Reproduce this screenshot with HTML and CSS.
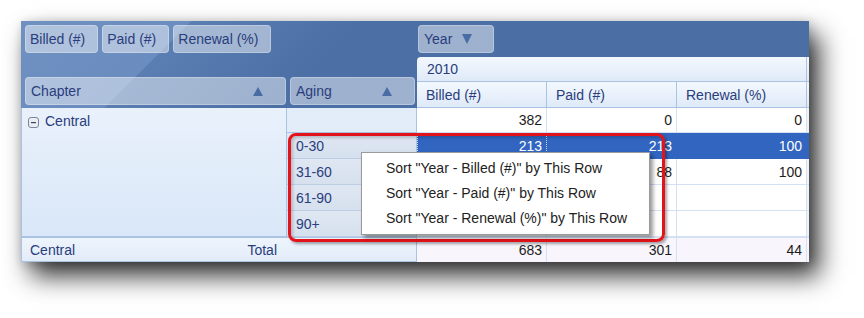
FILE: index.html
```html
<!DOCTYPE html>
<html lang="en">
<head>
    <meta charset="UTF-8">
    <title>Pivot Grid - Sort by Row</title>
    <link rel="stylesheet" href="styles.css">
</head>
<body>
    <div class="pivot">
        <div class="grid">
            <div class="filter-area">
                <span class="field">Billed (#)</span>
                <span class="field">Paid (#)</span>
                <span class="field">Renewal (%)</span>
            </div>
            <div class="column-area">
                <span class="field year">Year <i class="tri down"></i></span>
            </div>

            <div class="row-field chapter"><span class="field grow">Chapter <i class="tri up"></i></span></div>
            <div class="row-field aging"><span class="field grow">Aging <i class="tri up"></i></span></div>
            <div class="col-head span3 first">2010</div>
            <div class="col-head filler"></div>

            <div class="col-head">Billed (#)</div>
            <div class="col-head">Paid (#)</div>
            <div class="col-head">Renewal (%)</div>
            <div class="col-head filler"></div>

            <div class="row-head group">
                <svg class="collapse" width="11" height="11" viewBox="0 0 11 11">
                    <rect x="0.5" y="0.5" width="10" height="10" rx="2.5" fill="#e9eef5" stroke="#7c8598"/>
                    <rect x="3" y="5" width="5" height="1.2" fill="#3c4660"/>
                </svg>
                Central
            </div>
            <div class="row-head blank"></div>
            <div class="cell">382</div>
            <div class="cell">0</div>
            <div class="cell">0</div>
            <div class="cell filler"></div>

            <div class="row-head aging-val">0-30</div>
            <div class="cell sel focus">213</div>
            <div class="cell sel">213</div>
            <div class="cell sel">100</div>
            <div class="cell sel filler"></div>

            <div class="row-head aging-val">31-60</div>
            <div class="cell"></div>
            <div class="cell">88</div>
            <div class="cell">100</div>
            <div class="cell filler"></div>

            <div class="row-head aging-val">61-90</div>
            <div class="cell"></div>
            <div class="cell"></div>
            <div class="cell"></div>
            <div class="cell filler"></div>

            <div class="row-head aging-val">90+</div>
            <div class="cell"></div>
            <div class="cell"></div>
            <div class="cell"></div>
            <div class="cell filler"></div>

            <div class="row-head total">
                <span class="total-name">Central<span>Total</span></span>
            </div>
            <div class="cell total-val">683</div>
            <div class="cell total-val">301</div>
            <div class="cell total-val">44</div>
            <div class="cell total-val filler"></div>
        </div>

        <div class="highlight"></div>

        <ul class="menu">
            <li>Sort "Year - Billed (#)" by This Row</li>
            <li>Sort "Year - Paid (#)" by This Row</li>
            <li>Sort "Year - Renewal (%)" by This Row</li>
        </ul>
    </div>
</body>
</html>
```

FILE: styles.css
```css
html {
    background: #fff;
}

body {
    margin: 0;
    padding: 21px 0 0 21px;
    min-height: 318px;
    box-sizing: border-box;
    background: #fff;
    font-family: "Liberation Sans", Arial, sans-serif;
    font-size: 14px;
}

.pivot {
    position: relative;
    width: 788px;
    background: linear-gradient(135deg,
        #6f91c2 0,
        #6a8cbe 120px,
        #5a7eb2 121px,
        #4c70a6 240px,
        #4a6ea4 100%);
    box-shadow: 10px 14px 24px rgba(0, 0, 0, 0.8), 2px 2px 10px rgba(0, 0, 0, 0.2);
}

.grid {
    display: grid;
    grid-template-columns: 266px 130px 130px 130px 130px 2px;
    grid-template-rows: 36px 25px 26px 25px 26px 26px 26px 26px 25px;
}

.grid > div {
    box-sizing: border-box;
}

/* field buttons */
.filter-area {
    grid-column: span 2;
    display: flex;
    align-items: flex-start;
    gap: 4px;
    padding: 4px 0 0 4px;
}

.column-area {
    grid-column: span 4;
    display: flex;
    align-items: flex-start;
    padding: 4px 0 0 1px;
}

.field {
    box-sizing: border-box;
    height: 28px;
    display: flex;
    align-items: center;
    padding: 0 12px 0 4px;
    background: rgba(255, 255, 255, 0.46);
    border: 1px solid rgba(255, 255, 255, 0.28);
    border-radius: 4px;
    color: #2a3d7c;
}

.field.year {
    width: 76px;
    padding-left: 5px;
}

.field.year .tri {
    margin-left: 10px;
}

.field.grow {
    flex: 1;
    justify-content: space-between;
    padding: 0 22px 0 5px;
}

.row-field {
    grid-row: span 2;
    display: flex;
    align-items: flex-end;
    padding: 0 1px 3px 4px;
}

.row-field.aging {
    padding: 0 2px 3px 3px;
}

.tri {
    display: inline-block;
    width: 0;
    height: 0;
    border-left: 5px solid transparent;
    border-right: 5px solid transparent;
}

.tri.up {
    border-bottom: 9px solid #4a6ca4;
}

.tri.down {
    border-top: 10px solid #4a6ca4;
}

/* column headers */
.col-head {
    display: flex;
    align-items: center;
    padding-left: 9px;
    background: linear-gradient(#f3f8fe, #dfeaf8);
    border-right: 1px solid #abc3e2;
    border-bottom: 1px solid #abc3e2;
    color: #2a3d7c;
}

.col-head.span3 {
    grid-column: span 3;
    padding-left: 10px;
}

.col-head.first {
    border-top-left-radius: 4px;
}

.col-head.filler {
    padding: 0;
    border-right: 0;
}

/* row headers */
.row-head {
    display: flex;
    align-items: center;
    padding-left: 9px;
    background: linear-gradient(#eaf2fc, #dce8f8);
    border-right: 1px solid #abc3e2;
    border-bottom: 1px solid #abc3e2;
    color: #2a3d7c;
}

.row-head.group {
    grid-row: span 5;
    align-items: flex-start;
    padding: 5px 0 0 6px;
    border-left: 1px solid #abc3e2;
    gap: 6px;
    background: linear-gradient(#e9f1fb, #d9e7f8);
}

.collapse {
    margin-top: 4px;
}

.row-head.blank {
    background: #e3edfa;
}

.row-head.aging-val {
    background: linear-gradient(#dfe7f2, #d6e0ee);
    border-bottom-color: #bccde4;
}

.row-head.total {
    grid-column: span 2;
    padding: 0;
    border-left: 1px solid #abc3e2;
    border-top: 1px solid #abc3e2;
    background: linear-gradient(#eef4fc, #e2ecf9);
}

.total-name {
    box-sizing: border-box;
    width: 265px;
    display: flex;
    justify-content: space-between;
    padding: 0 10px 0 8px;
}

/* data cells */
.cell {
    display: flex;
    align-items: center;
    justify-content: flex-end;
    padding-right: 4px;
    background: #fff;
    border-right: 1px solid #d3e1f3;
    border-bottom: 1px solid #d3e1f3;
    color: #1c1c1c;
}

.cell.filler {
    padding: 0;
    border-right: 0;
    background: #eef3fa;
}

.cell.sel {
    background: #3165c0;
    color: #fff;
    border-color: #3165c0;
}

.cell.sel.filler {
    background: #3165c0;
}

.cell.focus {
    border-left: 1px dotted #cfdcf2;
    border-right: 1px dotted #cfdcf2;
}

.cell.total-val {
    background: #f8f5fd;
    border-top: 1px solid #d3e1f3;
    border-bottom: 0;
}

/* overlays */
.highlight {
    position: absolute;
    left: 267px;
    top: 112px;
    width: 377px;
    height: 109px;
    box-sizing: border-box;
    border: 3px solid #e3131b;
    border-radius: 8px;
    box-shadow: 2px 2px 3px rgba(0, 0, 0, 0.35), inset 2px 2px 3px rgba(0, 0, 0, 0.18);
}

.menu {
    position: absolute;
    left: 340px;
    top: 131px;
    width: 289px;
    box-sizing: border-box;
    margin: 0;
    padding: 3px 0;
    list-style: none;
    background: #fff;
    border: 1px solid #9a9a9a;
    box-shadow: 3px 3px 4px rgba(0, 0, 0, 0.4);
    color: #222;
}

.menu li {
    height: 25px;
    line-height: 25px;
    padding-left: 24px;
}
```
